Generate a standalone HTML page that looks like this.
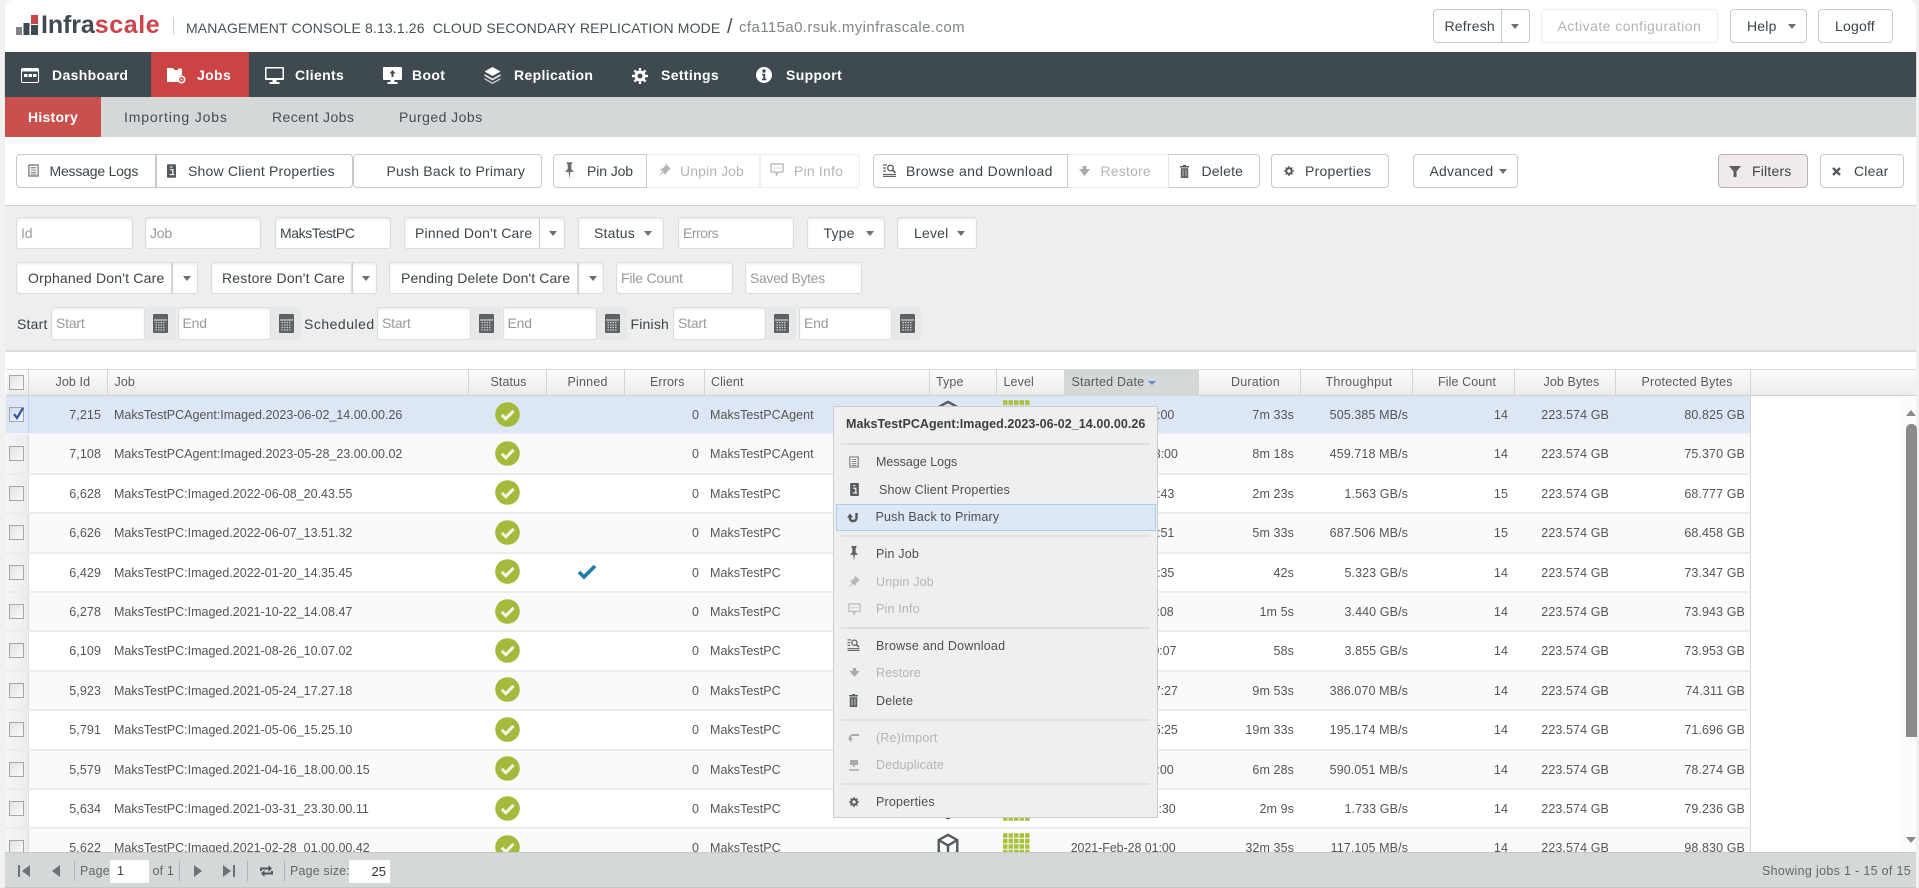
<!DOCTYPE html>
<html lang="en"><head><meta charset="utf-8"><title>Infrascale Management Console</title>
<style>
*{box-sizing:border-box}
html,body{margin:0;padding:0;width:1919px;height:888px;overflow:hidden;background:#f1f1f1;font-family:"Liberation Sans",Arial,sans-serif;font-size:14px;color:#3c4449}
.a{position:absolute}
.t{position:absolute;white-space:nowrap;line-height:18px;letter-spacing:.2px}
.b{position:absolute;height:34px;top:154px;background:#fff;border:1px solid #c9c9c9;border-radius:4px;line-height:32px;white-space:nowrap;letter-spacing:.2px;color:#3c4449}
.dis{color:#b4b4b4;border-color:#ececec}
.f{position:absolute;height:32px;background:#fff;border:1px solid #dcdcdc;border-radius:3px;line-height:30px;white-space:nowrap;letter-spacing:.2px;box-shadow:inset 0 2px 2px #f1f1f1}
.ph{color:#9a9a9a;padding-left:4px;letter-spacing:-.2px}
.ca{position:absolute;width:0;height:0;border-left:4.5px solid transparent;border-right:4.5px solid transparent;border-top:5px solid #6d6d6d}
.n{position:absolute;top:66px;color:#fff;font-weight:bold;line-height:18px;white-space:nowrap;letter-spacing:.35px}
.s{position:absolute;top:108px;line-height:18px;white-space:nowrap;letter-spacing:.35px;color:#444d52}
.h{position:absolute;top:372.5px;line-height:18px;font-size:12.5px;white-space:nowrap;color:#5a5a5a;letter-spacing:.1px}
.hl{position:absolute;top:369px;width:1px;height:26px;background:#d4d4d4}
.r{position:absolute;left:0;width:1751px;height:39.4px;line-height:38px;font-size:12.5px;color:#555;border-bottom:2px solid #ececec;border-right:1px solid #d4d4d4;white-space:nowrap;letter-spacing:.1px}
.r.o{background:#fff}.r.e{background:#fafafa}.r.sel{background:#dde6f5;border-bottom-color:#f4f4f4}
.r span{position:absolute;top:0}
.r svg{position:absolute}
.cb{position:absolute;left:6px;top:0;width:22.5px;height:100%;background:linear-gradient(90deg,#f6f6f6,#ececec);border-right:1px solid #dcdcdc}
.sel .cb{background:#dde6f5;border-right-color:#b9d2f0}
.box{position:absolute;left:3px;top:11px;width:15px;height:15px;background:linear-gradient(135deg,#e2e2e2,#fafafa);border:1px solid #a6a6a6}
.id{right:1649px}.job{left:114px;letter-spacing:0}.err{right:1051px}.cl{left:710px;letter-spacing:.06px}.dt{left:1070.7px;letter-spacing:-.08px}
.du{right:456px}.th{right:342px}.fc{right:242px}.jb{right:141px}.pb{right:5px}
.m{position:absolute;left:876px;line-height:18px;font-size:12.5px;white-space:nowrap;color:#4a4f54;letter-spacing:.18px}
.m.x{color:#b5b5b5}
.sp{position:absolute;left:841px;width:309px;height:2px;background:#e0e0e0}
.ft{position:absolute;top:862px;line-height:18px;font-size:12.5px;color:#666;white-space:nowrap;letter-spacing:.15px}
.fs{position:absolute;top:861px;width:1px;height:20px;background:#aeb2b4}
.st{left:494.5px;top:5.5px}
</style></head><body>

<svg width="0" height="0" style="position:absolute"><defs>
<symbol id="ok" viewBox="0 0 25 25"><circle cx="12.5" cy="12.5" r="12.3" fill="#a4ba3c"/><path d="M6.8 12.8l4 4 7.8-8" fill="none" stroke="#f4f7e6" stroke-width="3"/></symbol>
<symbol id="cube" viewBox="0 0 22 26"><path d="M11 1.8L20.3 7V19L11 24.2 1.700 19V7ZM1.700 7L11 12.500 20.300 7M11 12.500V24.200" fill="none" stroke="#54595d" stroke-width="2.400" stroke-linejoin="round"/></symbol>
<symbol id="lvl" viewBox="0 0 27 27"><path d="M0 2.500H27M0 8H27M0 13.500H27M0 19H27M0 24.500H27" stroke="#a9c23e" stroke-width="4.500" stroke-dasharray="4.500 1" fill="none"/></symbol>
<symbol id="log" viewBox="0 0 12 14"><path d="M1 1h10v12H1z" fill="#fff" stroke="#6b6f72" stroke-width="1.300"/><path d="M3 4h6M3 6.500h6M3 9h6M3 11h6" stroke="#6b6f72"/></symbol>
<symbol id="inf" viewBox="0 0 10 15"><rect width="10" height="15" rx="1" fill="#555a5e"/><path d="M3.500 3h2.500M3.500 6h3v5M3 11.500h5" stroke="#fff" stroke-width="1.300" fill="none"/></symbol>
<symbol id="pin" viewBox="0 0 12 18"><path d="M3 0h6v1.500L8 2.500v5l3 3H7l-1 7.500-1-7.500H1l3-3v-5l-1-1z" fill="currentColor"/></symbol>
<symbol id="unp" viewBox="0 0 14 14"><path d="M8 0l6 6-1.500.5L9.500 9.500 9 12 6.500 9.500 1 14l4.500-5.500L3 6l2.500-.5 3-3z" fill="currentColor"/></symbol>
<symbol id="chat" viewBox="0 0 14 13"><path d="M1 1h12v8H8l-1.500 3L6 9H1z" fill="none" stroke="currentColor" stroke-width="1.300"/><path d="M3.500 5h1.500M6.300 5h1.500M9 5h1.500" stroke="currentColor"/></symbol>
<symbol id="brw" viewBox="0 0 13 13"><path d="M0 1h4M0 4h3M0 7h3M0 10.500h13M0 12.500h13" stroke="#5f6366" stroke-width="1.200"/><circle cx="7.500" cy="4" r="2.800" fill="none" stroke="#5f6366" stroke-width="1.400"/><path d="M9.500 6l3 2.800" stroke="#5f6366" stroke-width="1.800"/></symbol>
<symbol id="rst" viewBox="0 0 12 11"><path d="M4 0h4v3.500h4L6 11 0 3.500h4z" fill="currentColor"/></symbol>
<symbol id="trs" viewBox="0 0 9 13"><path d="M3 0h3v1h3v1.500H0V1h3zM.8 3.300h7.400V13H.8z" fill="#5a5e61"/><path d="M3 4.500v7M6 4.500v7" stroke="#ddd" stroke-width=".8"/></symbol>
<symbol id="gear" viewBox="0 0 12 12"><circle cx="6" cy="6" r="3.300" fill="none" stroke="#55595c" stroke-width="2.400"/><path d="M6 0v2M6 10v2M0 6h2M10 6h2M1.800 1.800l1.400 1.400M8.800 8.800l1.400 1.400M1.800 10.200l1.400-1.400M8.800 3.200l1.400-1.400" stroke="#55595c" stroke-width="1.600"/></symbol>
<symbol id="cal" viewBox="0 0 15 19"><rect width="15" height="19" rx="1" fill="#5d6265"/><path d="M1 6h13" stroke="#eee"/><path d="M2.500 8.500h10M2.500 11h10M2.500 13.500h10M2.500 16h10" stroke="#c9cbcc" stroke-width="1.300" stroke-dasharray="1.500 1"/></symbol>
</defs></svg>

<!-- page shell -->
<div class="a" style="left:5px;top:0;width:1911px;height:888px;background:#fff;border-radius:8px 8px 0 0"></div>

<!-- header -->
<svg class="a" style="left:16px;top:14px" width="22" height="21"><rect y="13" width="6" height="8" fill="#7d8386"/><rect x="7.500" y="9" width="6" height="12" fill="#3e4a4f"/><rect x="15" y="1" width="7" height="9" fill="#c9454a"/><rect x="15" y="11" width="7" height="10" fill="#3e4a4f"/></svg>
<div class="t" style="left:41px;top:11px;font-size:25px;line-height:28px;font-weight:bold;color:#3e4a4f;letter-spacing:-.1px">Infra<span style="color:#c9454a;letter-spacing:.6px">scale</span></div>
<div class="a" style="left:173px;top:17px;width:1px;height:18px;background:#cfcfcf"></div>
<div class="t" style="left:186px;top:19px;color:#475055;letter-spacing:.14px;white-space:pre">MANAGEMENT CONSOLE 8.13.1.26  CLOUD SECONDARY REPLICATION MODE</div>
<div class="t" style="left:727px;top:15px;font-size:20px;line-height:24px;color:#475055">/</div>
<div class="t" style="left:739px;top:19px;color:#808588;font-size:15px;letter-spacing:.4px">cfa115a0.rsuk.myinfrascale.com</div>

<div class="b" style="left:1432.500px;top:9px;width:69px;padding-left:11px;border-radius:4px 0 0 4px">Refresh</div>
<div class="b" style="left:1500.500px;top:9px;width:29px;border-radius:0 4px 4px 0"></div>
<div class="ca" style="left:1511px;top:24px"></div>
<div class="b dis" style="left:1540.500px;top:9px;width:177.500px;padding-left:16px;letter-spacing:.45px">Activate configuration</div>
<div class="b" style="left:1730px;top:9px;width:76.500px;padding-left:16px">Help</div>
<div class="ca" style="left:1787.500px;top:24px"></div>
<div class="b" style="left:1818px;top:9px;width:74.500px;padding-left:16px">Logoff</div>

<!-- main nav -->
<div class="a" style="left:5px;top:52px;width:1911px;height:45px;background:#3e4a4f;box-shadow:0 1px 1px #888"></div>
<div class="a" style="left:151px;top:52px;width:98px;height:45px;background:#cb4343"></div>
<svg class="a" style="left:21px;top:68px" width="18" height="15"><rect x=".500" y=".500" width="17" height="14" rx="1.500" fill="#3e4a4f" stroke="#fff"/><rect x=".500" y=".500" width="17" height="3" fill="#fff"/><rect x="3" y="6" width="3.500" height="3" fill="#fff"/><rect x="7.500" y="6" width="3.500" height="3" fill="#fff"/><rect x="12" y="6" width="3.500" height="3" fill="#fff"/></svg>
<div class="n" style="left:52px">Dashboard</div>
<svg class="a" style="left:167px;top:67px" width="19" height="17"><path d="M0 1h6l1.500 2H15v5a5 5 0 0 0-4 7H0z" fill="#fff"/><circle cx="14.500" cy="12.500" r="3.200" fill="none" stroke="#fff" stroke-width="1.600"/><circle cx="14.500" cy="12.500" r="1" fill="#fff"/><path d="M11 1.500h4v2h-4z" fill="#fff"/></svg>
<div class="n" style="left:197px">Jobs</div>
<svg class="a" style="left:265px;top:67px" width="19" height="17"><rect width="19" height="13" rx="1" fill="#fff"/><rect x="1.500" y="1.500" width="16" height="9.500" fill="#3e4a4f"/><rect x="7.500" y="13" width="4" height="2" fill="#fff"/><rect x="4.500" y="15" width="10" height="2" fill="#fff"/></svg>
<div class="n" style="left:295px">Clients</div>
<svg class="a" style="left:383px;top:67px" width="19" height="17"><rect width="19" height="13" rx="1" fill="#fff"/><path d="M9.500 3l3 3.500h-2V10h-2V6.500h-2z" fill="#3e4a4f"/><rect x="7.500" y="13" width="4" height="2" fill="#fff"/><rect x="4.500" y="15" width="10" height="2" fill="#fff"/></svg>
<div class="n" style="left:412px">Boot</div>
<svg class="a" style="left:484px;top:67px" width="17" height="17"><path d="M8.500 0l8 4.500-8 4.500-8-4.500z" fill="#fff"/><path d="M.500 7l8 4.500 8-4.500v2l-8 4.500-8-4.500z" fill="#e4e4e4"/><path d="M.500 11l8 4.500 8-4.500v1.500L8.500 17 .500 12.500z" fill="#cfcfcf"/></svg>
<div class="n" style="left:514px">Replication</div>
<svg class="a" style="left:632px;top:67.500px" width="16" height="16" viewBox="0 0 12 12"><circle cx="6" cy="6" r="3" fill="none" stroke="#fff" stroke-width="2.200"/><path d="M6 0v2M6 10v2M0 6h2M10 6h2M1.800 1.800l1.400 1.400M8.800 8.800l1.400 1.400M1.800 10.200l1.400-1.400M8.800 3.200l1.400-1.400" stroke="#fff" stroke-width="1.800"/></svg>
<div class="n" style="left:661px">Settings</div>
<svg class="a" style="left:756px;top:67px" width="16" height="16"><circle cx="8" cy="8" r="8" fill="#fff"/><circle cx="8" cy="4" r="1.700" fill="#3e4a4f"/><path d="M6 6.800h3.200v5h1.300v1.500h-4.500v-1.500h1.200V8.300H6z" fill="#3e4a4f"/></svg>
<div class="n" style="left:786px">Support</div>

<!-- sub nav -->
<div class="a" style="left:5px;top:97px;width:1911px;height:40px;background:#d5d8d9"></div>
<div class="a" style="left:5px;top:97px;width:96px;height:40px;background:#c9504d"></div>
<div class="s" style="left:28px;color:#fff;font-weight:bold;letter-spacing:.25px">History</div>
<div class="s" style="left:124px;letter-spacing:.85px">Importing Jobs</div>
<div class="s" style="left:272px;letter-spacing:.4px">Recent Jobs</div>
<div class="s" style="left:399px;letter-spacing:.45px">Purged Jobs</div>

<!-- toolbar -->
<div class="b" style="left:16px;width:140px;padding-left:32.500px;border-radius:4px 0 0 4px;letter-spacing:-.2px">Message Logs</div>
<svg class="a" style="left:28px;top:164px" width="11" height="13"><use href="#log"/></svg>
<div class="b" style="left:155.500px;width:197px;padding-left:31.500px;border-radius:0 4px 4px 0">Show Client Properties</div>
<svg class="a" style="left:167px;top:163.500px" width="9" height="14"><use href="#inf"/></svg>
<div class="b" style="left:352.500px;width:189px;padding-left:33px">Push Back to Primary</div>
<div class="b" style="left:553px;width:94px;padding-left:33px;border-radius:4px 0 0 4px;letter-spacing:-.1px">Pin Job</div>
<svg class="a" style="left:564px;top:162px;color:#6a6e71" width="11" height="17"><use href="#pin"/></svg>
<div class="b dis" style="left:647px;width:113px;padding-left:33px;border-left:0;border-radius:0;letter-spacing:.1px">Unpin Job</div>
<svg class="a" style="left:657px;top:163px;color:#b5b5b5" width="14" height="14"><use href="#unp"/></svg>
<div class="b dis" style="left:760px;width:100px;padding-left:33px;border-radius:0 4px 4px 0">Pin Info</div>
<svg class="a" style="left:770px;top:163px;color:#b5b5b5" width="14" height="13"><use href="#chat"/></svg>
<div class="b" style="left:872.500px;width:195px;padding-left:32.500px;border-radius:4px 0 0 4px;letter-spacing:.35px">Browse and Download</div>
<svg class="a" style="left:883px;top:164px" width="13" height="13"><use href="#brw"/></svg>
<div class="b dis" style="left:1067.500px;width:100px;padding-left:33px;border-width:1px 0;border-radius:0">Restore</div>
<svg class="a" style="left:1079px;top:166px;color:#a8a8a8" width="11" height="10"><use href="#rst"/></svg>
<div class="b" style="left:1167.500px;width:92px;padding-left:33px;border-left-color:#e6e6e6;border-radius:0 4px 4px 0">Delete</div>
<svg class="a" style="left:1180px;top:164.500px" width="9" height="13"><use href="#trs"/></svg>
<div class="b" style="left:1271px;width:117.500px;padding-left:33px;letter-spacing:.25px">Properties</div>
<svg class="a" style="left:1284px;top:166px" width="10" height="10"><use href="#gear"/></svg>
<div class="b" style="left:1412.500px;width:105.500px;padding-left:16px">Advanced</div>
<div class="ca" style="left:1499px;top:169px"></div>
<div class="b" style="left:1718px;width:90px;padding-left:33px;background:#f0eaea;border-color:#b5b5b5">Filters</div>
<svg class="a" style="left:1728.500px;top:166px" width="12" height="11"><path d="M0 0h12L7.500 5.500V11h-3V5.500z" fill="#5b5f62"/></svg>
<div class="b" style="left:1820px;width:83.500px;padding-left:33px">Clear</div>
<svg class="a" style="left:1832px;top:167px" width="9" height="9"><path d="M1 1l7 7M8 1l-7 7" stroke="#55595c" stroke-width="2.300"/></svg>

<!-- filters -->
<div class="a" style="left:5px;top:205px;width:1911px;height:147px;background:#eee;border-top:1px solid #d2d2d2;border-bottom:2px solid #dcdcdc"></div>
<div class="f ph" style="left:16px;top:217px;width:117px">Id</div>
<div class="f ph" style="left:145px;top:217px;width:116px">Job</div>
<div class="f" style="left:275px;top:217px;width:116px;padding-left:4px;letter-spacing:-.4px">MaksTestPC</div>
<div class="f" style="left:404px;top:217px;width:135.500px;padding-left:10px;border-radius:3px 0 0 3px">Pinned Don't Care</div>
<div class="f" style="left:539px;top:217px;width:25.500px;border-left:0;border-radius:0 3px 3px 0;border-left:1px solid #d0d0d0"></div><div class="ca" style="left:549px;top:231px"></div>
<div class="f" style="left:577.500px;top:217px;width:86.500px;padding-left:15.500px">Status</div><div class="ca" style="left:644px;top:231px"></div>
<div class="f ph" style="left:678px;top:217px;width:116px;letter-spacing:-.5px">Errors</div>
<div class="f" style="left:807px;top:217px;width:77.500px;padding-left:15.500px">Type</div><div class="ca" style="left:865.500px;top:231px"></div>
<div class="f" style="left:897px;top:217px;width:80px;padding-left:16px">Level</div><div class="ca" style="left:957px;top:231px"></div>

<div class="f" style="left:16px;top:262px;width:156px;padding-left:11px;border-radius:3px 0 0 3px">Orphaned Don't Care</div>
<div class="f" style="left:172px;top:262px;width:26px;border-radius:0 3px 3px 0;border-left-color:#d0d0d0"></div><div class="ca" style="left:182.500px;top:276px"></div>
<div class="f" style="left:211px;top:262px;width:141px;padding-left:10px;border-radius:3px 0 0 3px">Restore Don't Care</div>
<div class="f" style="left:352px;top:262px;width:25px;border-radius:0 3px 3px 0;border-left-color:#d0d0d0"></div><div class="ca" style="left:361.500px;top:276px"></div>
<div class="f" style="left:389px;top:262px;width:189px;padding-left:11px;border-radius:3px 0 0 3px;letter-spacing:.12px">Pending Delete Don't Care</div>
<div class="f" style="left:578px;top:262px;width:26px;border-radius:0 3px 3px 0;border-left-color:#d0d0d0"></div><div class="ca" style="left:588.500px;top:276px"></div>
<div class="f ph" style="left:616px;top:262px;width:116.500px">File Count</div>
<div class="f ph" style="left:745px;top:262px;width:116.500px;letter-spacing:-.35px">Saved Bytes</div>

<div class="t" style="left:17px;top:315px">Start</div>
<div class="f ph" style="left:51px;top:307px;width:94px;height:33px">Start</div>
<div class="a" style="left:145px;top:307px;width:30.500px;height:33px;background:#e8e8e8"></div><svg class="a" style="left:153px;top:314px" width="15" height="19"><use href="#cal"/></svg>
<div class="f ph" style="left:177.500px;top:307px;width:93px;height:33px">End</div>
<div class="a" style="left:270.500px;top:307px;width:30.500px;height:33px;background:#e8e8e8"></div><svg class="a" style="left:279px;top:314px" width="15" height="19"><use href="#cal"/></svg>
<div class="t" style="left:304px;top:315px;letter-spacing:.5px">Scheduled</div>
<div class="f ph" style="left:377px;top:307px;width:94px;height:33px">Start</div>
<div class="a" style="left:471px;top:307px;width:29.500px;height:33px;background:#e8e8e8"></div><svg class="a" style="left:478.500px;top:314px" width="15" height="19"><use href="#cal"/></svg>
<div class="f ph" style="left:502.500px;top:307px;width:94.500px;height:33px">End</div>
<div class="a" style="left:597px;top:307px;width:29.500px;height:33px;background:#e8e8e8"></div><svg class="a" style="left:604.500px;top:314px" width="15" height="19"><use href="#cal"/></svg>
<div class="t" style="left:630.500px;top:315px">Finish</div>
<div class="f ph" style="left:673px;top:307px;width:93px;height:33px">Start</div>
<div class="a" style="left:766px;top:307px;width:29.500px;height:33px;background:#e8e8e8"></div><svg class="a" style="left:773.500px;top:314px" width="15" height="19"><use href="#cal"/></svg>
<div class="f ph" style="left:799px;top:307px;width:93px;height:33px">End</div>
<div class="a" style="left:892px;top:307px;width:29px;height:33px;background:#e8e8e8"></div><svg class="a" style="left:899.500px;top:314px" width="15" height="19"><use href="#cal"/></svg>

<!-- grid header -->
<div class="a" style="left:6px;top:369px;width:1910px;height:27px;background:linear-gradient(#fdfdfd,#eaebec);border-top:1px solid #dadada;border-bottom:1px solid #cfcfcf"></div>
<div class="a" style="left:1064px;top:369px;width:134px;height:27px;background:#d5d8d9;border-top:1px solid #dadada"></div>
<div class="box" style="left:9px;top:374.500px"></div>
<div class="hl" style="left:28px"></div><div class="hl" style="left:107px"></div><div class="hl" style="left:468px"></div><div class="hl" style="left:546px"></div><div class="hl" style="left:624px"></div><div class="hl" style="left:703.500px"></div><div class="hl" style="left:928.500px"></div><div class="hl" style="left:995.500px"></div><div class="hl" style="left:1064px"></div><div class="hl" style="left:1198px"></div><div class="hl" style="left:1299.500px"></div><div class="hl" style="left:1411.500px"></div><div class="hl" style="left:1514px"></div><div class="hl" style="left:1615px"></div><div class="hl" style="left:1750px"></div>
<div class="h" style="left:55.500px">Job Id</div>
<div class="h" style="left:114.500px">Job</div>
<div class="h" style="left:490.500px">Status</div>
<div class="h" style="left:567.500px;letter-spacing:.2px">Pinned</div>
<div class="h" style="left:650px">Errors</div>
<div class="h" style="left:711px">Client</div>
<div class="h" style="left:936px">Type</div>
<div class="h" style="left:1003.500px">Level</div>
<div class="h" style="left:1071.500px;letter-spacing:.22px">Started Date</div>
<div class="ca" style="left:1147.500px;top:381px;border-top-color:#5b8fd0;border-left-width:4px;border-right-width:4px;border-top-width:4px"></div>
<div class="h" style="left:1231px;letter-spacing:.2px">Duration</div>
<div class="h" style="left:1325.500px;letter-spacing:.3px">Throughput</div>
<div class="h" style="left:1438px">File Count</div>
<div class="h" style="left:1543.500px">Job Bytes</div>
<div class="h" style="left:1641.500px;letter-spacing:.2px">Protected Bytes</div>

<!-- grid rows -->
<div class="a" style="left:0;top:396px;width:1752px;height:456px;overflow:hidden">
<div style="position:absolute;left:0;top:-396px;width:1752px;height:900px">

<div class="r sel" style="top:396px"><div class="cb"><div class="box" style="background:linear-gradient(135deg,#cfd8ea,#f4f6fb)"></div><svg class="a" style="left:6px;top:11px" width="13" height="14"><path d="M2 7l3 4 6-10" fill="none" stroke="#2f55a4" stroke-width="2.200"/></svg></div>
<span class="id">7,215</span><span class="job">MaksTestPCAgent:Imaged.2023-06-02_14.00.00.26</span><svg class="st" width="25" height="25"><use href="#ok"/></svg><span class="err">0</span><span class="cl">MaksTestPCAgent</span><svg style="left:937px;top:4px" width="22" height="26"><use href="#cube"/></svg><svg style="left:1003px;top:4px" width="27" height="27"><use href="#lvl"/></svg><span class="dt">2023-Jun-02 14:00</span><span class="du">7m 33s</span><span class="th">505.385 MB/s</span><span class="fc">14</span><span class="jb">223.574 GB</span><span class="pb">80.825 GB</span></div>

<div class="r e" style="top:435.400px"><div class="cb"><div class="box"></div></div>
<span class="id">7,108</span><span class="job">MaksTestPCAgent:Imaged.2023-05-28_23.00.00.02</span><svg class="st" width="25" height="25"><use href="#ok"/></svg><span class="err">0</span><span class="cl">MaksTestPCAgent</span><span class="dt">2023-May-28 23:00</span><span class="du">8m 18s</span><span class="th">459.718 MB/s</span><span class="fc">14</span><span class="jb">223.574 GB</span><span class="pb">75.370 GB</span></div>

<div class="r o" style="top:474.800px"><div class="cb"><div class="box"></div></div>
<span class="id">6,628</span><span class="job">MaksTestPC:Imaged.2022-06-08_20.43.55</span><svg class="st" width="25" height="25"><use href="#ok"/></svg><span class="err">0</span><span class="cl">MaksTestPC</span><span class="dt">2022-Jun-08 20:43</span><span class="du">2m 23s</span><span class="th">1.563 GB/s</span><span class="fc">15</span><span class="jb">223.574 GB</span><span class="pb">68.777 GB</span></div>

<div class="r e" style="top:514.200px"><div class="cb"><div class="box"></div></div>
<span class="id">6,626</span><span class="job">MaksTestPC:Imaged.2022-06-07_13.51.32</span><svg class="st" width="25" height="25"><use href="#ok"/></svg><span class="err">0</span><span class="cl">MaksTestPC</span><span class="dt">2022-Jun-07 13:51</span><span class="du">5m 33s</span><span class="th">687.506 MB/s</span><span class="fc">15</span><span class="jb">223.574 GB</span><span class="pb">68.458 GB</span></div>

<div class="r o" style="top:553.600px"><div class="cb"><div class="box"></div></div>
<span class="id">6,429</span><span class="job">MaksTestPC:Imaged.2022-01-20_14.35.45</span><svg class="st" width="25" height="25"><use href="#ok"/></svg><svg style="left:576.500px;top:10px" width="20" height="16"><path d="M2 8l5 5L18 2" fill="none" stroke="#1c7ea8" stroke-width="3.600"/></svg><span class="err">0</span><span class="cl">MaksTestPC</span><span class="dt">2022-Jan-20 14:35</span><span class="du">42s</span><span class="th">5.323 GB/s</span><span class="fc">14</span><span class="jb">223.574 GB</span><span class="pb">73.347 GB</span></div>

<div class="r e" style="top:593px"><div class="cb"><div class="box"></div></div>
<span class="id">6,278</span><span class="job">MaksTestPC:Imaged.2021-10-22_14.08.47</span><svg class="st" width="25" height="25"><use href="#ok"/></svg><span class="err">0</span><span class="cl">MaksTestPC</span><span class="dt">2021-Oct-22 14:08</span><span class="du">1m 5s</span><span class="th">3.440 GB/s</span><span class="fc">14</span><span class="jb">223.574 GB</span><span class="pb">73.943 GB</span></div>

<div class="r o" style="top:632.400px"><div class="cb"><div class="box"></div></div>
<span class="id">6,109</span><span class="job">MaksTestPC:Imaged.2021-08-26_10.07.02</span><svg class="st" width="25" height="25"><use href="#ok"/></svg><span class="err">0</span><span class="cl">MaksTestPC</span><span class="dt">2021-Aug-26 10:07</span><span class="du">58s</span><span class="th">3.855 GB/s</span><span class="fc">14</span><span class="jb">223.574 GB</span><span class="pb">73.953 GB</span></div>

<div class="r e" style="top:671.800px"><div class="cb"><div class="box"></div></div>
<span class="id">5,923</span><span class="job">MaksTestPC:Imaged.2021-05-24_17.27.18</span><svg class="st" width="25" height="25"><use href="#ok"/></svg><span class="err">0</span><span class="cl">MaksTestPC</span><span class="dt">2021-May-24 17:27</span><span class="du">9m 53s</span><span class="th">386.070 MB/s</span><span class="fc">14</span><span class="jb">223.574 GB</span><span class="pb">74.311 GB</span></div>

<div class="r o" style="top:711.200px"><div class="cb"><div class="box"></div></div>
<span class="id">5,791</span><span class="job">MaksTestPC:Imaged.2021-05-06_15.25.10</span><svg class="st" width="25" height="25"><use href="#ok"/></svg><span class="err">0</span><span class="cl">MaksTestPC</span><span class="dt">2021-May-06 15:25</span><span class="du">19m 33s</span><span class="th">195.174 MB/s</span><span class="fc">14</span><span class="jb">223.574 GB</span><span class="pb">71.696 GB</span></div>

<div class="r e" style="top:750.600px"><div class="cb"><div class="box"></div></div>
<span class="id">5,579</span><span class="job">MaksTestPC:Imaged.2021-04-16_18.00.00.15</span><svg class="st" width="25" height="25"><use href="#ok"/></svg><span class="err">0</span><span class="cl">MaksTestPC</span><span class="dt">2021-Apr-16 18:00</span><span class="du">6m 28s</span><span class="th">590.051 MB/s</span><span class="fc">14</span><span class="jb">223.574 GB</span><span class="pb">78.274 GB</span></div>

<div class="r o" style="top:790px"><div class="cb"><div class="box"></div></div>
<span class="id">5,634</span><span class="job">MaksTestPC:Imaged.2021-03-31_23.30.00.11</span><svg class="st" width="25" height="25"><use href="#ok"/></svg><span class="err">0</span><span class="cl">MaksTestPC</span><svg style="left:937px;top:4px" width="22" height="26"><use href="#cube"/></svg><svg style="left:1003px;top:4px" width="27" height="27"><use href="#lvl"/></svg><span class="dt">2021-Mar-31 23:30</span><span class="du">2m 9s</span><span class="th">1.733 GB/s</span><span class="fc">14</span><span class="jb">223.574 GB</span><span class="pb">79.236 GB</span></div>

<div class="r e" style="top:829.400px"><div class="cb"><div class="box"></div></div>
<span class="id">5,622</span><span class="job">MaksTestPC:Imaged.2021-02-28_01.00.00.42</span><svg class="st" width="25" height="25"><use href="#ok"/></svg><span class="err">0</span><span class="cl">MaksTestPC</span><svg style="left:937px;top:4px" width="22" height="26"><use href="#cube"/></svg><svg style="left:1003px;top:4px" width="27" height="27"><use href="#lvl"/></svg><span class="dt">2021-Feb-28 01:00</span><span class="du">32m 35s</span><span class="th">117.105 MB/s</span><span class="fc">14</span><span class="jb">223.574 GB</span><span class="pb">98.830 GB</span></div>
</div></div>

<!-- left gutter -->
<div class="a" style="left:0;top:396px;width:5.500px;height:492px;background:#f1f1f1"></div>

<!-- scrollbar -->
<div class="a" style="left:1901px;top:397px;width:15px;height:455px;background:#fbfbfb"></div>
<div class="a" style="left:1905.500px;top:410px;width:0;height:0;border-left:5.500px solid transparent;border-right:5.500px solid transparent;border-bottom:6px solid #8a8a8a"></div>
<div class="a" style="left:1905.500px;top:424px;width:11px;height:313px;background:#8b8b8b;border-radius:5px 5px 0 0"></div>
<div class="a" style="left:1905.500px;top:837px;width:0;height:0;border-left:5.500px solid transparent;border-right:5.500px solid transparent;border-top:6px solid #8a8a8a"></div>

<!-- context menu -->
<div class="a" style="left:833.300px;top:406px;width:324.500px;height:412px;background:#efefef;border:1px solid #cbcbcb"></div>
<div class="m" style="left:846px;top:415px;font-weight:bold;color:#3a3f43;letter-spacing:.05px">MaksTestPCAgent:Imaged.2023-06-02_14.00.00.26</div>
<div class="sp" style="top:443px"></div>
<svg class="a" style="left:849px;top:456px" width="10" height="12"><use href="#log"/></svg>
<div class="m" style="top:453px;letter-spacing:.0px">Message Logs</div>
<svg class="a" style="left:850px;top:483px" width="9" height="13"><use href="#inf"/></svg>
<div class="m" style="top:481px;left:879px">Show Client Properties</div>
<div class="a" style="left:836px;top:504px;width:319.500px;height:27px;background:#dde7f5;border:1px solid #a8cdf5"></div>
<svg class="a" style="left:847px;top:512.500px" width="11" height="10"><path d="M9.500 0v5a3 3 0 0 1-3 3H5.500a2.500 2.500 0 0 1-2.500-2.500V3.500" fill="none" stroke="#515659" stroke-width="2.400"/><path d="M0 4.500L3 .5 6 4.500z" fill="#515659"/></svg>
<div class="m" style="top:508px;left:875.500px">Push Back to Primary</div>
<div class="sp" style="top:535px"></div>
<svg class="a" style="left:849px;top:546px;color:#5c6063" width="10" height="15"><use href="#pin"/></svg>
<div class="m" style="top:545px">Pin Job</div>
<svg class="a" style="left:847px;top:575px;color:#b8b8b8" width="13" height="13"><use href="#unp"/></svg>
<div class="m x" style="top:573px">Unpin Job</div>
<svg class="a" style="left:848px;top:603px;color:#b5b5b5" width="13" height="12"><use href="#chat"/></svg>
<div class="m x" style="top:600px">Pin Info</div>
<div class="sp" style="top:627px"></div>
<svg class="a" style="left:847px;top:639px" width="13" height="12"><use href="#brw"/></svg>
<div class="m" style="top:637px;letter-spacing:.22px">Browse and Download</div>
<svg class="a" style="left:849px;top:668px;color:#a8a8a8" width="11" height="9"><use href="#rst"/></svg>
<div class="m x" style="top:664px">Restore</div>
<svg class="a" style="left:849px;top:694px" width="9" height="13"><use href="#trs"/></svg>
<div class="m" style="top:692px">Delete</div>
<div class="sp" style="top:719px"></div>
<svg class="a" style="left:848px;top:733px" width="12" height="9"><path d="M11 2H5a3 3 0 0 0-3 3v1" fill="none" stroke="#aaa" stroke-width="2"/><path d="M0 5h5L2.500 9z" fill="#aaa"/></svg>
<div class="m x" style="top:729px">(Re)Import</div>
<svg class="a" style="left:849px;top:760px" width="10" height="11"><rect x="1" width="8" height="5" fill="#aaa"/><path d="M5 5v2M0 10h10" stroke="#aaa" stroke-width="1.600"/></svg>
<div class="m x" style="top:756px">Deduplicate</div>
<div class="sp" style="top:783px"></div>
<svg class="a" style="left:849px;top:797px" width="10" height="10"><use href="#gear"/></svg>
<div class="m" style="top:793px">Properties</div>

<!-- footer -->
<div class="a" style="left:5px;top:852px;width:1911px;height:36px;background:#d5d8d9;border-top:1px solid #c6c9ca;border-bottom:1px solid #c4c7c8"></div>
<svg class="a" style="left:18px;top:865px" width="12" height="12"><path d="M0 0h2v12H0zM12 0v12L4 6z" fill="#6d7275"/></svg>
<svg class="a" style="left:52px;top:865px" width="8" height="12"><path d="M8 0v12L0 6z" fill="#6d7275"/></svg>
<div class="fs" style="left:74px"></div>
<div class="ft" style="left:80px">Page</div>
<div class="a" style="left:110px;top:860px;width:39px;height:23px;background:#fff;line-height:23px;padding-left:7px;font-size:12.5px;color:#444">1</div>
<div class="ft" style="left:152.500px">of 1</div>
<div class="fs" style="left:179px"></div>
<svg class="a" style="left:194px;top:865px" width="8" height="12"><path d="M0 0v12l8-6z" fill="#6d7275"/></svg>
<svg class="a" style="left:223px;top:865px" width="12" height="12"><path d="M0 0v12l8-6zM10 0h2v12h-2z" fill="#6d7275"/></svg>
<div class="fs" style="left:247px"></div>
<svg class="a" style="left:260px;top:864px" width="13" height="14"><path d="M1 7V4.500h9M12 7v2.500H3" fill="none" stroke="#54595c" stroke-width="2"/><path d="M8.500 1L12 4.500 8.500 8zM4.500 6L1 9.500 4.500 13z" fill="#54595c"/></svg>
<div class="fs" style="left:284px"></div>
<div class="ft" style="left:290px">Page size:</div>
<div class="a" style="left:349px;top:860px;width:41px;height:23px;background:#fff;line-height:23px;text-align:right;padding-right:4px;font-size:13px;color:#333">25</div>
<div class="ft" style="left:1762px;letter-spacing:.32px">Showing jobs 1 - 15 of 15</div>
</body></html>
